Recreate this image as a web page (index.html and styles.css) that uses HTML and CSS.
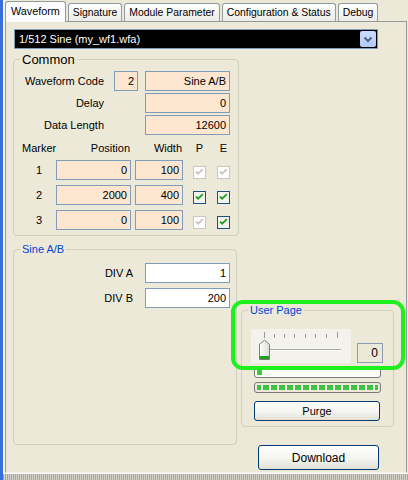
FILE: index.html
```html
<!DOCTYPE html>
<html>
<head>
<meta charset="utf-8">
<link rel="stylesheet" href="styles.css">
</head>
<body>
<div class="win">
  <div class="tabs">
    <div class="tab active">Waveform</div>
    <div class="tab">Signature</div>
    <div class="tab">Module Parameter</div>
    <div class="tab">Configuration &amp; Status</div>
    <div class="tab">Debug</div>
  </div>
  <div class="panel">
    <div class="combo">
      <span class="combo-text">1/512 Sine (my_wf1.wfa)</span>
      <span class="combo-btn"><svg width="16" height="16" viewBox="0 0 16 16"><path d="M4.5 6.5l3.5 3.5 3.5-3.5" fill="none" stroke="#4d6185" stroke-width="2"/></svg></span>
    </div>
    <div class="body">
      <div class="col-left">
        <fieldset class="grp common">
          <legend class="big">Common</legend>
          <div class="form">
            <div class="lbl">Waveform Code</div>
            <div class="inp">2</div>
            <div class="inp">Sine A/B</div>
            <div class="lbl">Delay</div>
            <div class="inp c3">0</div>
            <div class="lbl">Data Length</div>
            <div class="inp c3">12600</div>
          </div>
          <div class="markers">
            <div class="hd first">Marker</div>
            <div class="hd r">Position</div>
            <div class="hd r">Width</div>
            <div class="hd ck">P</div>
            <div class="hd ck">E</div>

            <div class="num">1</div>
            <div class="inp">0</div>
            <div class="inp w">100</div>
            <svg class="cb" viewBox="0 0 13 13"><rect x=".5" y=".5" width="12" height="12" fill="#fff" stroke="#cac8bb"/><path d="M3 5.5l2.2 2.2 4.6-4.6" fill="none" stroke="#cac8bb" stroke-width="1.8"/></svg>
            <svg class="cb" viewBox="0 0 13 13"><rect x=".5" y=".5" width="12" height="12" fill="#fff" stroke="#cac8bb"/><path d="M3 5.5l2.2 2.2 4.6-4.6" fill="none" stroke="#cac8bb" stroke-width="1.8"/></svg>

            <div class="num">2</div>
            <div class="inp">2000</div>
            <div class="inp w">400</div>
            <svg class="cb" viewBox="0 0 13 13"><rect x=".5" y=".5" width="12" height="12" fill="#f3f3ef" stroke="#1c5180"/><path d="M3 5.5l2.2 2.2 4.6-4.6" fill="none" stroke="#21a121" stroke-width="1.8"/></svg>
            <svg class="cb" viewBox="0 0 13 13"><rect x=".5" y=".5" width="12" height="12" fill="#f3f3ef" stroke="#1c5180"/><path d="M3 5.5l2.2 2.2 4.6-4.6" fill="none" stroke="#21a121" stroke-width="1.8"/></svg>

            <div class="num">3</div>
            <div class="inp">0</div>
            <div class="inp w">100</div>
            <svg class="cb" viewBox="0 0 13 13"><rect x=".5" y=".5" width="12" height="12" fill="#fff" stroke="#cac8bb"/><path d="M3 5.5l2.2 2.2 4.6-4.6" fill="none" stroke="#cac8bb" stroke-width="1.8"/></svg>
            <svg class="cb" viewBox="0 0 13 13"><rect x=".5" y=".5" width="12" height="12" fill="#f3f3ef" stroke="#1c5180"/><path d="M3 5.5l2.2 2.2 4.6-4.6" fill="none" stroke="#21a121" stroke-width="1.8"/></svg>
          </div>
        </fieldset>
        <fieldset class="grp sine">
          <legend class="blue">Sine A/B</legend>
          <div class="divs">
            <div class="lbl">DIV A</div>
            <div class="inp white">1</div>
            <div class="lbl">DIV B</div>
            <div class="inp white">200</div>
          </div>
        </fieldset>
      </div>
      <div class="col-right">
        <fieldset class="grp user">
          <legend class="blue">User Page</legend>
          <div class="highlight"></div>
          <div class="slider-row">
            <svg class="slider" width="100" height="34" viewBox="0 0 100 34">
              <defs>
                <linearGradient id="th" x1="0" y1="0" x2="1" y2="0">
                  <stop offset="0" stop-color="#ffffff"/>
                  <stop offset="1" stop-color="#dcdcd4"/>
                </linearGradient>
              </defs>
              <g stroke="#9a9a94" stroke-width="1">
                <line x1="13.5" y1="3" x2="13.5" y2="9"/>
                <line x1="23.5" y1="5" x2="23.5" y2="9"/>
                <line x1="33.5" y1="5" x2="33.5" y2="9"/>
                <line x1="43.5" y1="5" x2="43.5" y2="9"/>
                <line x1="54.5" y1="5" x2="54.5" y2="9"/>
                <line x1="64.5" y1="5" x2="64.5" y2="9"/>
                <line x1="75.5" y1="5" x2="75.5" y2="9"/>
                <line x1="86.5" y1="3" x2="86.5" y2="9"/>
              </g>
              <line x1="13" y1="20.5" x2="90" y2="20.5" stroke="#a6a6a0"/>
              <line x1="13" y1="21.5" x2="90" y2="21.5" stroke="#ffffff"/>
              <polygon points="8.5,15.5 13.5,11 18.5,15.5 18.5,30.5 8.5,30.5" fill="url(#th)" stroke="#7c7c78"/>
              <rect x="9" y="27" width="9" height="3" fill="#21a121"/>
            </svg>
            <div class="numbox">0</div>
          </div>
          <div class="prog"><span class="blk"></span></div>
          <div class="prog dashes"></div>
          <button class="btn purge">Purge</button>
        </fieldset>
        <button class="btn dl">Download</button>
      </div>
    </div>
  </div>
  <div class="status"></div>
</div>
</body>
</html>
```
FILE: styles.css
```css
* { box-sizing: border-box; }
html, body { margin: 0; padding: 0; }
body {
  font-family: "Liberation Sans", Arial, sans-serif;
  font-size: 11px;
  color: #000;
  background: #ECE9D8;
}
.win {
  width: 408px;
  height: 480px;
  display: flex;
  flex-direction: column;
  border-left: 3px solid #3a6ed8;
  background: linear-gradient(90deg, #f7f6f0 0 2px, #ECE9D8 2px);
  overflow: hidden;
}
.tabs {
  display: flex;
  align-items: flex-end;
  height: 21px;
  padding-left: 2px;
  position: relative;
  z-index: 2;
  font-size: 10.4px;
}
.tab {
  height: 18px;
  margin-right: 2px;
  padding: 0 4px;
  border: 1px solid #919B9C;
  border-bottom: none;
  border-radius: 3px 3px 0 0;
  background: linear-gradient(#ffffff, #ecebe6);
  line-height: 17px;
  white-space: nowrap;
}
.tab.active {
  height: 21px;
  margin-bottom: -1px;
  padding: 0 5px;
  line-height: 18px;
  background: #fcfcfe;
  font-size: 10.8px;
}
.panel {
  margin-left: 2px;
  width: 402px;
  height: 452px;
  border: 1px solid #919B9C;
  border-bottom-color: #f4f3ee;
  background: #ECE9D8;
  padding: 7px 0 2px 7px;
  display: flex;
  flex-direction: column;
}
.combo {
  margin-left: 1px;
  width: 364px;
  height: 20px;
  border: 1px solid #7F9DB9;
  background: #000;
  color: #fff;
  display: flex;
  align-items: center;
  padding: 0 1px 0 4px;
}
.combo-text { flex: 1; }
.combo-btn {
  width: 16px;
  height: 16px;
  border-radius: 2px;
  background: linear-gradient(#cddcfc, #b2c8f6);
  display: flex;
}
.body {
  flex: 1;
  display: flex;
  gap: 2px;
  margin-top: 3px;
}
.col-left {
  width: 226px;
  display: flex;
  flex-direction: column;
}
.col-right {
  width: 153px;
  display: flex;
  flex-direction: column;
  justify-content: flex-end;
}
.grp {
  margin: 0;
  padding: 0;
  min-width: 0;
  border: 1px solid #D0D0BF;
  border-radius: 4px;
}
.grp legend {
  margin-left: 6px;
  padding: 0 2px;
  line-height: 13px;
}
.grp legend.big { font-size: 13px; line-height: 15px; }
.grp legend.blue { color: #0046D5; }

.form {
  display: grid;
  grid-template-columns: 93px 24px 85px;
  column-gap: 7px;
  row-gap: 2px;
  grid-auto-rows: 20px;
  margin-top: 4px;
}
.lbl {
  text-align: right;
  padding-right: 3px;
  align-self: center;
}
.inp {
  border: 1px solid #7F9DB9;
  background: #fde6cf;
  text-align: right;
  padding-right: 3px;
  line-height: 18px;
  height: 20px;
}
.inp.white { background: #fff; }
.c3 { grid-column: 3; }

.markers {
  display: grid;
  grid-template-columns: 42px 75px 52px 23px 24px;
  grid-template-rows: 13px 20px 20px 20px;
  row-gap: 5px;
  margin-top: 7px;
  margin-bottom: 5px;
}
.markers > :nth-child(-n+5) { margin-bottom: -4px; }
.hd { line-height: 13px; }
.hd.first { padding-left: 8px; }
.hd.r { text-align: right; padding-right: 1px; }
.hd.ck { width: 13px; justify-self: end; text-align: center; }
.num { padding-left: 8px; text-align: center; align-self: center; }
.inp.w { width: 48px; justify-self: end; }
.cb {
  width: 13px;
  height: 13px;
  justify-self: end;
  align-self: end;
  margin-bottom: 1px;
  display: block;
}

.sine {
  flex: 1;
  margin-top: 7px;
  margin-bottom: 25px;
  width: 224px;
}
.divs {
  display: grid;
  grid-template-columns: 122px 85px;
  column-gap: 9px;
  row-gap: 5px;
  grid-auto-rows: 20px;
  margin-top: 7px;
}

.user {
  position: relative;
  padding-bottom: 5px;
}
.highlight {
  position: absolute;
  left: -11px;
  top: -17px;
  width: 174px;
  height: 70px;
  border: 4px solid #1ef01e;
  border-radius: 12px;
  pointer-events: none;
}
.slider-row {
  display: flex;
  align-items: flex-end;
  gap: 6px;
  margin: 12px 0 0 9px;
}
.slider {
  display: block;
  background: #f3f2ec;
}
.numbox {
  width: 26px;
  height: 20px;
  border: 1px solid #8a9cb4;
  text-align: right;
  padding-right: 4px;
  line-height: 18px;
  font-size: 12px;
}
.prog {
  margin: 4px 0 0 12px;
  width: 127px;
  height: 11px;
  border: 1px solid #7a7a7a;
  border-radius: 3px;
  background: #fbfbf8;
  padding: 2px;
}
.blk {
  display: block;
  width: 5px;
  height: 5px;
  background: #3ec43e;
}
.prog.dashes {
  margin-top: 4px;
  background-clip: content-box;
  background-color: #fbfbf8;
  background-image: repeating-linear-gradient(90deg, #3ec43e 0 6px, #fbfbf8 6px 8px);
  padding: 2px;
}
.btn {
  font: inherit;
  color: #000;
  border: 1px solid #003C74;
  border-radius: 3px;
  background: linear-gradient(#ffffff 0%, #f4f4f0 55%, #e2dfd6 100%);
  padding: 0;
}
.purge {
  display: block;
  margin: 8px 0 0 12px;
  width: 126px;
  height: 20px;
}
.dl {
  margin: 18px 0 0 17px;
  width: 121px;
  height: 25px;
  font-size: 12px;
}
.status {
  height: 7px;
  border-top: 1px solid #ffffff;
  background: repeating-linear-gradient(90deg, #a9a79c 0 1px, #d6d4ca 1px 2px);
}
```
